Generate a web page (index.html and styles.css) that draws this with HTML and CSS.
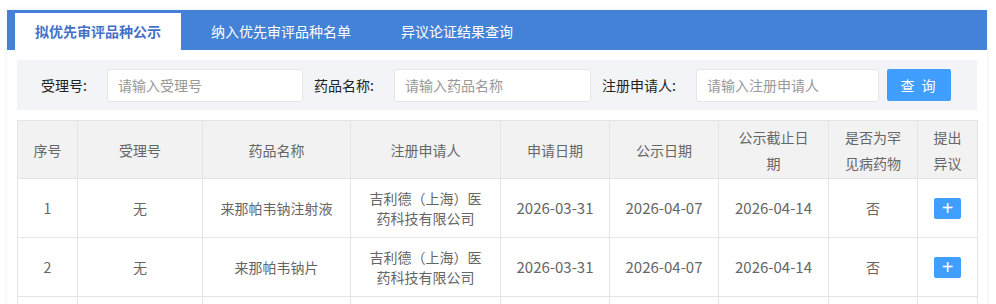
FILE: index.html
```html
<!DOCTYPE html>
<html lang="zh-CN">
<head>
  <meta charset="UTF-8" />
  <meta name="viewport" content="width=device-width, initial-scale=1.0"/>
  <title>优先审评公示</title>
  <link rel="stylesheet" href="styles.css">
</head>
<body>
  <div class="card">
    <ul class="tabs">
      <li class="tab ativo">拟优先审评品种公示</li>
      <li class="tab">纳入优先审评品种名单</li>
      <li class="tab">异议论证结果查询</li>
    </ul>

    <form class="busca">
      <label class="rotulo rotulo-1">受理号:</label>
      <input type="text" class="campo campo-1" placeholder="请输入受理号" />
      <label class="rotulo rotulo-2">药品名称:</label>
      <input type="text" class="campo campo-2" placeholder="请输入药品名称" />
      <label class="rotulo rotulo-3">注册申请人:</label>
      <input type="text" class="campo campo-3" placeholder="请输入注册申请人" />
      <button type="button" class="btn-buscar">查 询</button>
    </form>

    <table class="lista">
      <colgroup>
        <col style="width: 60px">
        <col style="width: 125px">
        <col style="width: 148px">
        <col style="width: 150px">
        <col style="width: 109px">
        <col style="width: 109px">
        <col style="width: 110px">
        <col style="width: 89px">
        <col style="width: 60px">
      </colgroup>
      <thead>
        <tr>
          <th>序号</th>
          <th>受理号</th>
          <th>药品名称</th>
          <th>注册申请人</th>
          <th>申请日期</th>
          <th>公示日期</th>
          <th>公示截止日<br>期</th>
          <th>是否为罕<br>见病药物</th>
          <th>提出<br>异议</th>
        </tr>
      </thead>
      <tbody>
        <tr>
          <td>1</td>
          <td>无</td>
          <td>来那帕韦钠注射液</td>
          <td>吉利德（上海）医<br>药科技有限公司</td>
          <td class="data">2026-03-31</td>
          <td class="data">2026-04-07</td>
          <td class="data">2026-04-14</td>
          <td>否</td>
          <td><button type="button" class="btn-mais">+</button></td>
        </tr>
        <tr>
          <td>2</td>
          <td>无</td>
          <td>来那帕韦钠片</td>
          <td>吉利德（上海）医<br>药科技有限公司</td>
          <td class="data">2026-03-31</td>
          <td class="data">2026-04-07</td>
          <td class="data">2026-04-14</td>
          <td>否</td>
          <td><button type="button" class="btn-mais">+</button></td>
        </tr>
        <tr class="vazia">
          <td></td>
          <td></td>
          <td></td>
          <td></td>
          <td></td>
          <td></td>
          <td></td>
          <td></td>
          <td></td>
        </tr>
      </tbody>
    </table>
  </div>
</body>
</html>
```

FILE: styles.css
```css
body {
  margin: 0;
  font-family: "Microsoft YaHei", "Noto Sans CJK SC", "Liberation Sans", sans-serif;
  font-size: 14px;
  background: #ffffff;
  color: #333;
}
.card {
  margin: 10px 9px 0 7px;
  background: white;
  box-shadow: 0 0 4px rgba(0, 0, 0, 0.08);
  padding-bottom: 20px;
}
.tabs {
  list-style: none;
  margin: 0;
  padding: 3px 8px 0;
  height: 37px;
  background: #4382d6;
  display: flex;
}
.tab {
  padding: 0 20px;
  margin-right: 10px;
  line-height: 37px;
  color: white;
  font-size: 14px;
}
.tab.ativo {
  background: white;
  color: #4470c8;
  font-weight: bold;
}
.busca {
  margin: 10px 10px 0;
  background: #f3f4f8;
  height: 50px;
  padding: 0 0 0 24px;
  display: flex;
  align-items: center;
}
.rotulo {
  color: #222;
  flex: none;
}
.rotulo-1 {
  width: 66px;
}
.rotulo-2 {
  width: 80px;
}
.rotulo-3 {
  width: 94px;
}
.campo {
  height: 33px;
  box-sizing: border-box;
  border: 1px solid #e6e6e6;
  border-radius: 3px;
  padding: 0 10px;
  font-family: inherit;
  font-size: 14px;
  background: white;
  margin-right: 11px;
  outline: none;
  flex: none;
}
.campo::placeholder {
  color: #999;
}
.campo-1 {
  width: 196px;
}
.campo-2 {
  width: 197px;
}
.campo-3 {
  width: 183px;
  margin-right: 8px;
}
.btn-buscar {
  width: 64px;
  height: 32px;
  border: none;
  border-radius: 2px;
  background: #409eff;
  color: white;
  font-family: inherit;
  font-size: 14px;
  letter-spacing: 2px;
  cursor: pointer;
}
.lista {
  margin: 10px 10px 0;
  width: 960px;
  border-collapse: collapse;
  table-layout: fixed;
  text-align: center;
}
.lista th, .lista td {
  border: 1px solid #e4e4e4;
}
.lista th {
  background: #f2f2f2;
  color: #666;
  font-weight: normal;
  line-height: 26px;
  padding: 3px 6px 2px;
}
.lista td {
  color: #666;
  line-height: 20px;
  padding: 9px 6px 9px;
}
.lista tr.vazia td {
  height: 40px;
}
.lista td.data {
  font-size: 15px;
}
.btn-mais {
  width: 27px;
  height: 21px;
  border: none;
  border-radius: 2px;
  background: #409eff;
  color: white;
  font-size: 20px;
  line-height: 21px;
  padding: 0;
  font-family: "Liberation Sans", sans-serif;
  vertical-align: middle;
  cursor: pointer;
}
```
